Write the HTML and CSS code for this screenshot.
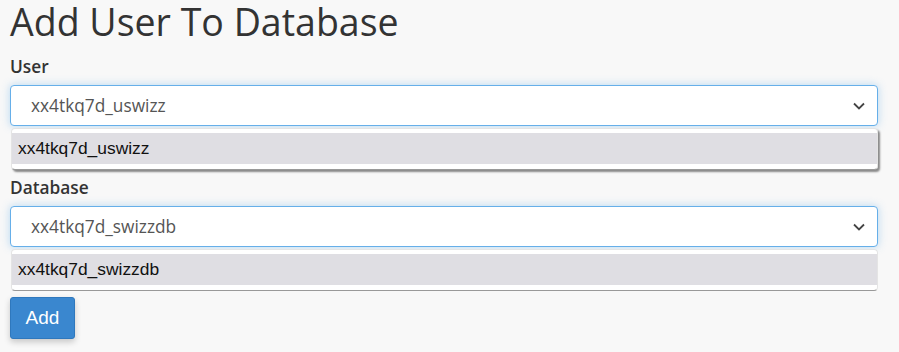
FILE: index.html
```html
<!DOCTYPE html>
<html lang="en">
<head>
    <meta charset="UTF-8">
    <meta name="viewport" content="width=device-width, initial-scale=1.0">
    <title>Add User To Database</title>
    <link rel="stylesheet" href="styles.css">
</head>
<body>
    <div class="page">
        <h1>Add User To Database</h1>

        <div class="form-group">
            <label class="field-label">User</label>
            <div class="select-wrap">
                <div class="select">
                    <span class="select-value">xx4tkq7d_uswizz</span>
                    <svg class="chevron" width="12" height="8" viewBox="0 0 12 8"><path d="M1 1.5 L6 6.5 L11 1.5" fill="none" stroke="#444" stroke-width="1.8"/></svg>
                </div>
                <div class="dropdown shadowed">
                    <div class="option">xx4tkq7d_uswizz</div>
                </div>
            </div>
        </div>

        <div class="form-group db-group">
            <label class="field-label">Database</label>
            <div class="select-wrap">
                <div class="select">
                    <span class="select-value">xx4tkq7d_swizzdb</span>
                    <svg class="chevron" width="12" height="8" viewBox="0 0 12 8"><path d="M1 1.5 L6 6.5 L11 1.5" fill="none" stroke="#444" stroke-width="1.8"/></svg>
                </div>
                <div class="dropdown">
                    <div class="option">xx4tkq7d_swizzdb</div>
                </div>
            </div>
        </div>

        <button class="button">Add</button>
    </div>
</body>
</html>
```

FILE: styles.css
```css
* {
    box-sizing: border-box;
}
html, body {
    margin: 0;
    height: 100%;
}
body {
    font-family: "Open Sans", sans-serif;
    background-color: #f8f8f8;
    color: #333;
    overflow: hidden;
}
.page {
    padding: 0 21px 0 10px;
}
h1 {
    font-size: 37.5px;
    font-weight: 400;
    line-height: 44px;
    margin: 0 0 12px;
    color: #333;
}
.form-group {
    margin-bottom: 51px;
}
.db-group {
    margin-bottom: 50px;
}
.field-label {
    display: block;
    font-size: 17.3px;
    font-weight: 600;
    line-height: 22px;
    margin-bottom: 7px;
}
.select-wrap {
    position: relative;
}
.select {
    height: 41px;
    background: #fff;
    border: 1px solid #66afe9;
    border-radius: 4px;
    box-shadow: 0 0 8px rgba(102, 175, 233, 0.45);
    display: flex;
    align-items: center;
    justify-content: space-between;
    padding: 0 12px 0 20px;
}
.select-value {
    font-size: 17.3px;
    color: #555;
}
.dropdown {
    position: absolute;
    left: 1px;
    right: 0;
    top: 43px;
    height: 42px;
    background: #fff;
    border: 1px solid #e4e4e4;
    border-radius: 4px;
    padding-top: 4px;
    border-bottom-color: #999;
}
.dropdown.shadowed {
    box-shadow: 2px 2px 2px rgba(0, 0, 0, 0.45);
}
.option {
    height: 31px;
    background: #dfdee3;
    font-family: "Liberation Sans", Arial, sans-serif;
    font-size: 17.4px;
    color: #111;
    line-height: 31px;
    padding-left: 6px;
}
.button {
    background-color: #3a87cf;
    color: #fff;
    font-family: "Liberation Sans", Arial, sans-serif;
    font-size: 19px;
    border: 1px solid #2f78bd;
    border-radius: 3px;
    width: 65px;
    height: 42px;
    padding: 0;
    box-shadow: 0 3px 6px rgba(0, 0, 0, 0.2);
}
```
